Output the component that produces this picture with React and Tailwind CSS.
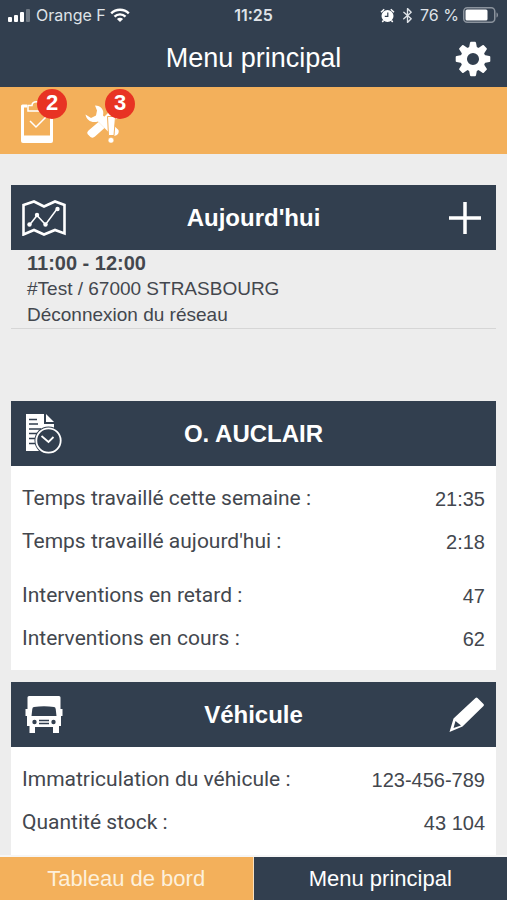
import { IoBluetooth } from 'react-icons/io5'

// ─── Status bar glyphs ──────────────────────────────────────────────────────
function SignalIcon() {
  return (
    <svg width="24" height="14" viewBox="0 0 24 14" fill="#fff">
      <rect x="0" y="9" width="4" height="5" rx="1" />
      <rect x="6" y="7" width="4" height="7" rx="1" />
      <rect x="12" y="4" width="4" height="10" rx="1" />
      <rect x="18" y="1" width="4" height="13" rx="1" opacity="0.3" />
    </svg>
  )
}

function WifiIcon() {
  return (
    <svg width="20" height="15" viewBox="0 0 20 15" fill="none" stroke="#fff" strokeWidth="2.4">
      <path d="M1.2 5.4C6 .6 14 .6 18.8 5.4" />
      <path d="M4.5 8.6C7.5 5.6 12.5 5.6 15.5 8.6" />
      <path d="M10 14L6.9 10.9C8.6 9.2 11.4 9.2 13.1 10.9Z" fill="#fff" stroke="none" />
    </svg>
  )
}

function AlarmIcon() {
  return (
    <svg width="15" height="15" viewBox="0 0 15 15">
      <path d="M1 4.2L4.2 1.3M14 4.2L10.8 1.3M3.5 12.5L2.3 14M11.5 12.5L12.7 14" stroke="#fff" strokeWidth="1.5" />
      <circle cx="7.5" cy="8" r="6" fill="#fff" />
      <path d="M7.8 4.5V8.3H4.8" fill="none" stroke="#323f4f" strokeWidth="1.2" />
    </svg>
  )
}

function BatteryIcon() {
  return (
    <svg width="36" height="16" viewBox="0 0 36 16">
      <rect x="0.75" y="0.75" width="31" height="14.5" rx="3.5" fill="none" stroke="#8b939d" strokeWidth="1.5" />
      <rect x="2.5" y="2.5" width="22" height="11" rx="1.5" fill="#fff" />
      <path d="M33.5 5.5c2 .6 2 4.4 0 5z" fill="#8b939d" />
    </svg>
  )
}

// ─── Toolbar and card icons ─────────────────────────────────────────────────
const GEAR_TEETH = [0, 45, 90, 135, 180, 225, 270, 315]

function GearIcon() {
  return (
    <svg width="36" height="36" viewBox="0 0 36 36" fill="#fff">
      {GEAR_TEETH.map(angle => (
        <path
          key={angle}
          d="M13.8 8L15 1.7Q15.2.7 16 .7H20Q20.8.7 21 1.7L22.2 8Z"
          transform={`rotate(${angle} 18 18)`}
        />
      ))}
      <circle cx="18" cy="18" r="9.3" fill="none" stroke="#fff" strokeWidth="6.5" />
    </svg>
  )
}

function ClipboardIcon() {
  return (
    <svg width="32" height="42" viewBox="0 0 32 42" fill="none" stroke="#fff">
      <path d="M6 5H1.5V36H30.5V5H24" strokeWidth="3" strokeLinejoin="round" />
      <path d="M0 36H32V40a2 2 0 0 1-2 2H2a2 2 0 0 1-2-2Z" fill="#fff" stroke="none" />
      <path d="M7 10V4.5h4c0-5 9-5 9 0h5V10Z" strokeWidth="1.5" />
      <path d="M9 20l6 6 10-10" strokeWidth="1.5" />
    </svg>
  )
}

function ToolsIcon() {
  return (
    <svg width="42" height="42" viewBox="0 0 42 42" fill="#fff" className="shrink-0">
      <path d="M11 4.500C17 4.500 20.500 9 19 14.500L34.500 29Q35.500 32.500 32 34.500L28.500 35 14 20.500C8 22.500 2.500 19.500 1.500 13.500L7 17 12 14.500 13 9.500Z" />
      <path d="M14.500 21L20.500 27 11 35.500Q9 37.500 6.500 36L3.500 33Q2.500 31 4.500 29.500Z" />
      <path d="M20 16L24 12H34V17L25 23Z" />
      <path d="M23.500 15.500H31.500L30 34.500H24.500Z" stroke="#f3b05b" strokeWidth="1" />
      <circle cx="27" cy="39.200" r="2.800" stroke="#f3b05b" strokeWidth="0.5" />
    </svg>
  )
}

function MapIcon() {
  return (
    <svg width="44" height="36" viewBox="0 0 44 36" fill="none" stroke="#fff">
      <path d="M1.5 5L12 1.5 22 6.5 33 1.5 42.5 5V33.5L33 30 22 34.5 12 30 1.5 34.5Z" strokeWidth="2.6" />
      <path d="M7.5 25L15 15.5 23.5 24.5 35 9" strokeWidth="1.5" />
      <g fill="#fff" stroke="none">
        <circle cx="7.5" cy="24.5" r="2.2" />
        <circle cx="15" cy="15" r="2.2" />
        <circle cx="23.5" cy="24.5" r="2.2" />
        <circle cx="35.5" cy="9" r="2.2" />
      </g>
    </svg>
  )
}

function TimesheetIcon() {
  return (
    <svg width="36" height="40" viewBox="0 0 36 40">
      <path d="M0 0H18V10H28V37H0Z" fill="#fff" />
      <path d="M20 0L28 8H20Z" fill="#fff" />
      <path d="M3 5.5h8M3 10h9M3 15h12M3 19.5h8M3 24.5h6M3 29.5h7" stroke="#323f4f" strokeWidth="1.6" />
      <circle cx="22.5" cy="26.5" r="14" fill="#323f4f" />
      <circle cx="22.5" cy="26.5" r="12.2" fill="none" stroke="#fff" strokeWidth="1.8" />
      <path d="M15.5 22l7 6 5-5" fill="none" stroke="#fff" strokeWidth="1.8" />
    </svg>
  )
}

function TruckIcon() {
  return (
    <svg width="38" height="38" viewBox="0 0 38 38">
      <path d="M2.5 1.5Q2.5 0 4 0H34Q35.5 0 35.5 1.5V13H37.5V20H36V30H34V37H28V31H10V37H4.5V30H2V20H.5V13H2.5Z" fill="#fff" />
      <path d="M9 11Q19 9.5 29 11Q30.5 11.2 30.7 13L31.5 20H6.5L7.3 13Q7.5 11.2 9 11Z" fill="#323f4f" />
      <circle cx="9.5" cy="26" r="2.2" fill="#323f4f" />
      <circle cx="28.5" cy="26" r="2.2" fill="#323f4f" />
      <path d="M14 24.5h10M14 27.5h10" stroke="#323f4f" strokeWidth="1.3" />
    </svg>
  )
}

function PlusIcon() {
  return (
    <svg width="32" height="32" viewBox="0 0 32 32" stroke="#fff" strokeWidth="3.5">
      <path d="M16 0V32M0 16H32" />
    </svg>
  )
}

function PencilIcon() {
  return (
    <svg width="36" height="36" viewBox="0 0 36 36">
      <path d="M26.5 1Q27.5 0 28.5 1L34.5 7Q35.5 8 34.5 9L13.5 29.5.5 35 4.5 21.5Z" fill="#fff" />
      <path d="M6.5 24L12 28.5 4.5 31Z" fill="#323f4f" />
    </svg>
  )
}

// ─── Shared pieces ──────────────────────────────────────────────────────────
function AlertButton({ icon: Icon, count, label }) {
  return (
    <button type="button" aria-label={label} className="relative flex h-11 w-9 items-end justify-center">
      <Icon />
      <span className="absolute -top-[10px] left-[18px] flex size-[30px] items-center justify-center rounded-full bg-[#e83323] text-[22px] font-bold">
        {count}
      </span>
    </button>
  )
}

function CardHeader({ icon: Icon, title, action }) {
  return (
    <header className="grid h-[65px] grid-cols-[44px_1fr_44px] items-center bg-[#323f4f] px-[11px] text-white">
      <div className="flex justify-center">
        <Icon />
      </div>
      <h2 className="text-center text-2xl font-bold">{title}</h2>
      {action}
    </header>
  )
}

function Row({ label, value }) {
  return (
    <div className="flex h-[43px] items-center justify-between">
      <dt className="font-[Roboto,sans-serif] text-[21px]">{label}</dt>
      <dd>{value}</dd>
    </div>
  )
}

// ─── Screen ─────────────────────────────────────────────────────────────────
export default function App() {
  return (
    <div className="flex min-h-screen flex-col bg-[#ededed] font-['Liberation_Sans',Arial,sans-serif] text-xl text-[#43474e]">
      <header className="bg-[#323f4f] text-white">
        <div className="grid h-[30px] grid-cols-3 items-center px-2 font-[Inter,sans-serif] text-base text-[#dfe3e8]">
          <div className="flex items-center gap-1">
            <SignalIcon />
            <span>Orange F</span>
            <WifiIcon />
          </div>
          <time className="text-center font-semibold">11:25</time>
          <div className="flex items-center justify-end gap-1">
            <AlarmIcon />
            <IoBluetooth size={17} />
            <span className="whitespace-nowrap">76 %</span>
            <BatteryIcon />
          </div>
        </div>
        <div className="grid h-[57px] grid-cols-[48px_1fr_48px] items-center px-4">
          <h1 className="col-start-2 text-center text-[27px]">Menu principal</h1>
          <button type="button" aria-label="Réglages" className="justify-self-end">
            <GearIcon />
          </button>
        </div>
      </header>

      <div className="flex h-[67px] items-center gap-8 bg-[#f3b05b] px-[19px] text-white">
        <AlertButton icon={ClipboardIcon} count={2} label="Tâches" />
        <AlertButton icon={ToolsIcon} count={3} label="Interventions" />
      </div>

      <main className="flex grow flex-col px-[11px] pt-[31px]">
        <section className="mb-[72px]">
          <CardHeader
            icon={MapIcon}
            title="Aujourd'hui"
            action={
              <button type="button" aria-label="Ajouter" className="justify-self-end pr-1">
                <PlusIcon />
              </button>
            }
          />
          <div className="border-b border-[#d6d6d6] px-4 text-[19px] leading-[26px]">
            <p className="text-xl leading-[26px] font-bold">11:00 - 12:00</p>
            <p>#Test / 67000 STRASBOURG</p>
            <p>Déconnexion du réseau</p>
          </div>
        </section>

        <section className="mb-3">
          <CardHeader icon={TimesheetIcon} title="O. AUCLAIR" />
          <dl className="bg-white px-[11px] pt-[11px] pb-[10px]">
            <Row label="Temps travaillé cette semaine :" value="21:35" />
            <Row label="Temps travaillé aujourd'hui :" value="2:18" />
            <div className="h-[11px]" />
            <Row label="Interventions en retard :" value="47" />
            <Row label="Interventions en cours :" value="62" />
          </dl>
        </section>

        <section className="flex grow flex-col">
          <CardHeader
            icon={TruckIcon}
            title="Véhicule"
            action={
              <button type="button" aria-label="Modifier" className="justify-self-end">
                <PencilIcon />
              </button>
            }
          />
          <dl className="grow bg-white px-[11px] pt-[11px] pb-[10px]">
            <Row label="Immatriculation du véhicule :" value="123-456-789" />
            <Row label="Quantité stock :" value="43 104" />
          </dl>
        </section>
      </main>

      <nav className="sticky bottom-0 grid h-[45px] grid-cols-2 border-t-2 border-[#f6f6f6] text-center text-[22px] leading-[43px] text-white">
        <a href="#dashboard" className="border-r border-[#f8e0c0] bg-[#f3b05b] text-[#fdf0dc]">Tableau de bord</a>
        <a href="#menu" className="bg-[#323f4f]">Menu principal</a>
      </nav>
    </div>
  )
}
